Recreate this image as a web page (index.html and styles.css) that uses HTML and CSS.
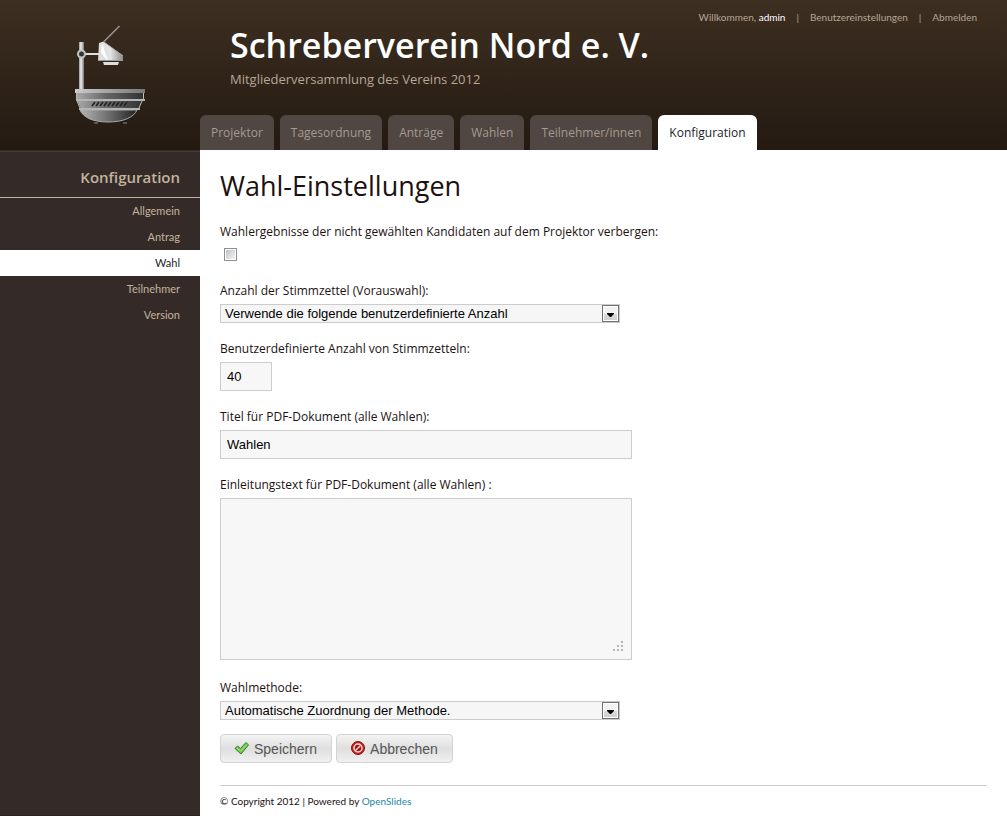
FILE: index.html
```html
<!DOCTYPE html>
<html lang="de">
<head>
<meta charset="utf-8">
<title>Wahl-Einstellungen</title>
<link rel="stylesheet" href="styles.css">
</head>
<body>
<header class="header">
  <a class="logo" href="#" aria-label="OpenSlides">
    <svg width="80" height="110" viewBox="0 0 80 110" aria-hidden="true">
      <defs>
        <linearGradient id="pole"><stop offset="0" stop-color="#999"/><stop offset=".4" stop-color="#eee"/><stop offset="1" stop-color="#777"/></linearGradient>
        <linearGradient id="head"><stop offset="0" stop-color="#ddd"/><stop offset=".5" stop-color="#e4e4e4"/><stop offset="1" stop-color="#8a8a8a"/></linearGradient>
        <linearGradient id="rim"><stop offset="0" stop-color="#ccc"/><stop offset="1" stop-color="#777"/></linearGradient>
        <linearGradient id="bowl"><stop offset="0" stop-color="#aaa"/><stop offset=".45" stop-color="#666"/><stop offset="1" stop-color="#333"/></linearGradient>
        <linearGradient id="base"><stop offset="0" stop-color="#b5b5b5"/><stop offset=".5" stop-color="#6e6e6e"/><stop offset="1" stop-color="#222"/></linearGradient>
      </defs>
      <path d="M34 21.500 49.500 6" stroke="#999" stroke-width="1.500"/>
      <rect x="9" y="22" width="5" height="48" fill="url(#pole)"/>
      <path d="M15 34h14" stroke="#ddd" stroke-width="2"/>
      <circle cx="11.500" cy="34" r="3.500" fill="#333" stroke="#c5c5c5" stroke-width="2"/>
      <path d="M29 23 33.500 21.500 53 35.500V41H28z" fill="url(#head)"/>
      <path d="M32 23 38 41 31 33z" fill="#fff"/>
      <path d="M34 22 53 36" stroke="#aaa"/>
      <path d="M28 40.500h25" stroke="#999"/>
      <path d="M33 42h16l-1 3H34z" fill="#ddd"/>
      <path d="M6 73h67v6H6z" fill="url(#bowl)"/>
      <path d="M7 80h65l-4 9H11z" fill="url(#bowl)"/>
      <path d="M10 90h57c-3 7-13 12-29 12S13 97 10 90z" fill="url(#base)" stroke="#aaa"/>
      <path d="M5 69h70v4H5z" fill="url(#rim)"/>
      <path d="M6 80h69" stroke="#b5b5b5" stroke-width="2"/>
      <path d="M9 89h61" stroke="#b5b5b5" stroke-width="2"/>
      <path d="M6.500 73v6M73.500 73v6M7 81l3 7M72 81l-3 7" stroke="#bbb"/>
      <path d="m22 86 3-4m1 4 3-4m1 4 3-4m1 4 3-4m1 4 3-4m1 4 3-4m1 4 3-4m1 4 3-4m1 4 3-4" stroke="#222" stroke-width="1.500"/>
      <path d="M24 102h4v2h-4zM53 102h4v2h-4z" fill="#555"/>
    </svg>
  </a>
  <div class="masthead">
    <div class="userbar">
      <span>Willkommen, <span class="user-name">admin</span></span>
      <span>|</span>
      <a href="#">Benutzereinstellungen</a>
      <span>|</span>
      <a href="#">Abmelden</a>
    </div>
    <div class="brand">
      <div class="brand-title">Schreberverein Nord e. V.</div>
      <div class="brand-subtitle">Mitgliederversammlung des Vereins 2012</div>
    </div>
    <nav class="tabs">
      <a class="tab" href="#">Projektor</a>
      <a class="tab" href="#">Tagesordnung</a>
      <a class="tab" href="#">Anträge</a>
      <a class="tab" href="#">Wahlen</a>
      <a class="tab" href="#">Teilnehmer/innen</a>
      <a class="tab tab-active" href="#" aria-current="page">Konfiguration</a>
    </nav>
  </div>
</header>
<div class="page">
  <aside class="sidebar">
    <h2 class="sidebar-title">Konfiguration</h2>
    <nav class="side-nav">
      <a class="side-link" href="#">Allgemein</a>
      <a class="side-link" href="#">Antrag</a>
      <a class="side-link side-link-active" href="#" aria-current="page">Wahl</a>
      <a class="side-link" href="#">Teilnehmer</a>
      <a class="side-link" href="#">Version</a>
    </nav>
  </aside>
  <main class="content">
    <h1 class="page-title">Wahl-Einstellungen</h1>
    <form class="settings">
      <div class="field">
        <label for="hide">Wahlergebnisse der nicht gewählten Kandidaten auf dem Projektor verbergen:</label>
        <div class="check-row"><input class="checkbox" type="checkbox" id="hide"></div>
      </div>
      <div class="field">
        <label for="ballots">Anzahl der Stimmzettel (Vorauswahl):</label>
        <div class="select-wrap">
          <select class="select" id="ballots"><option>Verwende die folgende benutzerdefinierte Anzahl</option></select>
          <span class="select-arrow"><svg width="7" height="4" viewBox="0 0 7 4" aria-hidden="true"><path d="M0 0h7v1L4 4H3L0 1z"/></svg></span>
        </div>
      </div>
      <div class="field">
        <label for="count">Benutzerdefinierte Anzahl von Stimmzetteln:</label>
        <input class="input input-short" type="text" id="count" value="40">
      </div>
      <div class="field">
        <label for="title">Titel für PDF-Dokument (alle Wahlen):</label>
        <input class="input" type="text" id="title" value="Wahlen">
      </div>
      <div class="field">
        <label for="intro">Einleitungstext für PDF-Dokument (alle Wahlen) :</label>
        <div class="textarea-wrap">
          <textarea class="input textarea" id="intro"></textarea>
          <svg class="grip" width="10" height="10" viewBox="0 0 10 10" aria-hidden="true"><path d="M8 0h2v2H8zM4 4h2v2H4zM8 4h2v2H8zM0 8h2v2H0zM4 8h2v2H4zM8 8h2v2H8z" fill="#b5b5b5"/></svg>
        </div>
      </div>
      <div class="field">
        <label for="method">Wahlmethode:</label>
        <div class="select-wrap">
          <select class="select" id="method"><option>Automatische Zuordnung der Methode.</option></select>
          <span class="select-arrow"><svg width="7" height="4" viewBox="0 0 7 4" aria-hidden="true"><path d="M0 0h7v1L4 4H3L0 1z"/></svg></span>
        </div>
      </div>
      <div class="actions">
        <button class="button" type="submit">
          <svg width="16" height="16" viewBox="0 0 16 16" aria-hidden="true"><path d="m1 7.500 2.500-2.500L6.500 7.500 12 1.500 14.500 4 7 13z" fill="#72c552" stroke="#2f7d22" stroke-linejoin="round"/><path d="m3 7 3.700 3L13 3.500" fill="none" stroke="#a9e58c"/></svg>
          <span>Speichern</span>
        </button>
        <button class="button" type="button">
          <svg width="16" height="16" viewBox="0 0 16 16" aria-hidden="true"><circle cx="8" cy="7" r="6.500" fill="#c22020" stroke="#8f1010"/><circle cx="8" cy="7" r="4" fill="#a81010" stroke="#f0d8d8" stroke-width="1.500"/><path d="m5.500 9.500 5-5" stroke="#f0d8d8" stroke-width="1.500"/></svg>
          <span>Abbrechen</span>
        </button>
      </div>
    </form>
    <footer class="footer">© Copyright 2012 | Powered by <a href="#">OpenSlides</a></footer>
  </main>
</div>
</body>
</html>
```
FILE: styles.css
```css
* { box-sizing: border-box; }

body {
  margin: 0;
  min-height: 100vh;
  display: flex;
  flex-direction: column;
  background: #fff;
  color: #1c1110;
  font: 12px/20px "Trebuchet MS", "Open Sans", sans-serif;
}

a { color: inherit; text-decoration: none; }

.header {
  display: flex;
  min-height: 150px;
  background: linear-gradient(#3d2f21, #241a12);
  color: #b5a696;
}

.logo { flex: 0 0 200px; padding: 20px 0 0 70px; }
.logo svg { display: block; }

.masthead {
  flex: 1;
  display: flex;
  flex-direction: column;
  position: relative;
}

.userbar {
  position: absolute;
  top: 10px;
  right: 30px;
  display: flex;
  gap: 11px;
  font-family: "Trebuchet MS", Lato, sans-serif;
  font-size: 10px;
  line-height: 14px;
}
.user-name { color: #fff; }

.brand { flex: 1; padding: 25px 30px 0; }
.brand-title { color: #fff; font-size: 34px; font-weight: 600; line-height: 40px; }
.brand-subtitle { font-size: 13px; line-height: 28px; }

.tabs { display: flex; gap: 6px; }
.tab {
  height: 35px;
  padding: 0 11px;
  border-radius: 6px 6px 0 0;
  background: #504642;
  color: #a59a90;
  line-height: 35px;
}
.tab-active { background: #fff; color: #1c1d2b; }

.page { flex: 1; display: flex; }

.sidebar {
  flex: 0 0 200px;
  padding-top: 1px;
  border-bottom: 1px solid #2b2321;
  background: linear-gradient(#453b39, #453b39) 0 1px / 100% 1px no-repeat #342b29;
  color: #c4b29c;
  text-align: right;
}
.sidebar-title {
  margin: 0;
  height: 47px;
  padding: 16px 20px 0;
  border-bottom: 1px solid #c4b29c;
  font-size: 15px;
  font-weight: 600;
  line-height: 20px;
}
.side-nav { display: flex; flex-direction: column; }
.side-link {
  padding: 0 20px;
  font-family: "Trebuchet MS", Lato, sans-serif;
  font-size: 11px;
  line-height: 26px;
}
.side-link-active { background: #fff; color: #1c1d2b; }

.content { flex: 1; padding: 18px 20px 0; }
.page-title { margin: 0 0 18px; font-size: 27px; font-weight: 400; line-height: 36px; }

.settings { display: flex; flex-direction: column; gap: 16px; }
.field { display: flex; flex-direction: column; align-items: flex-start; gap: 3px; }

.check-row { display: flex; height: 20px; padding: 3px 0 0 4px; }
.checkbox {
  appearance: none;
  width: 13px;
  height: 13px;
  margin: 0;
  border: 1px solid #8e8f8f;
  background: linear-gradient(135deg, #bcc1cb, #f6f6f6) content-box #f4f4f4;
  padding: 1px;
}
.checkbox:checked { background: #333 content-box; }

.select-wrap { position: relative; width: 400px; max-width: 100%; }
.select {
  appearance: none;
  display: block;
  width: 100%;
  height: 19px;
  padding: 0 20px 0 4px;
  border: 1px solid #ccc;
  border-radius: 0;
  background: #f6f6f6;
  color: #000;
  font: 13px/17px Arial, "Liberation Sans", sans-serif;
}
.select-arrow {
  position: absolute;
  top: 1px;
  right: 1px;
  display: flex;
  align-items: center;
  justify-content: center;
  width: 17px;
  height: 17px;
  padding-top: 3px;
  border: 1px solid #707070;
  box-shadow: inset 0 0 0 1px #fff;
  background: linear-gradient(#f2f2f2 50%, #dcdcdc 50%, #cfcfcf);
  pointer-events: none;
}

.input {
  display: block;
  width: 412px;
  max-width: 100%;
  height: 29px;
  padding: 0 6px;
  border: 1px solid #ccc;
  border-radius: 0;
  background: #f7f7f7;
  color: #000;
  font: 13px/17px Arial, "Liberation Sans", sans-serif;
}
.input-short { width: 52px; }
.textarea { height: 162px; padding: 6px; resize: none; }
.textarea-wrap { position: relative; max-width: 100%; padding-bottom: 2px; }
.grip { position: absolute; right: 9px; bottom: 11px; pointer-events: none; }

.actions { display: flex; gap: 4px; margin-top: -2px; }
.button {
  display: flex;
  align-items: center;
  gap: 4px;
  height: 29px;
  padding: 0 14px 0 13px;
  border: 1px solid #d3d3d3;
  border-radius: 4px;
  background: linear-gradient(#f4f4f4, #dfdfdf 50%, #f0f0f0);
  color: #555;
  font: 14px/20px Arial, "Liberation Sans", sans-serif;
}

.footer {
  margin-top: 22px;
  border-top: 1px solid #ccc;
  font-family: "Trebuchet MS", Lato, sans-serif;
  font-size: 10px;
  line-height: 30px;
}
.footer a { color: #2484ac; }
```
